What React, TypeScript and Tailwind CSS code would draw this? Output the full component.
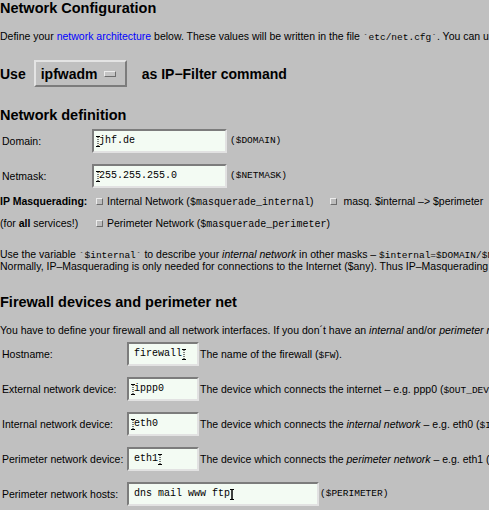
import type { ReactNode } from 'react'

const code = "font-['Liberation_Mono',monospace] text-[9.5px] leading-[10px]"
const codeWide = "font-['Liberation_Mono',monospace] text-[10px] leading-[10px]"

function Caret({ strong = false }: { strong?: boolean }) {
  return (
    <svg width="4" height="11" viewBox="0 0 4 11" className="inline-block align-middle shrink-0">
      <path d="M0 0.5h4M0 10.5h4" stroke="#000" strokeWidth="1" />
      <path d="M2 1v9" stroke="#000" strokeWidth={strong ? 1.5 : 1} strokeDasharray={strong ? undefined : '1 1'} />
    </svg>
  )
}

function Field({ value, width, caret }: { value: string; width: string; caret: 'before' | 'after' | 'strong' }) {
  return (
    <div
      className={`${width} h-[24px] shrink-0 flex items-center pl-[5px] bg-[#f3fbf3] border-2 border-t-[#7c7c7c] border-l-[#7c7c7c] border-r-[#e2e2e2] border-b-[#e2e2e2] font-['Liberation_Mono',monospace] text-[10px]`}
    >
      {caret === 'before' && <span className="-ml-[3px] mr-[-1px] flex"><Caret /></span>}
      <span>{value}</span>
      {caret !== 'before' && <Caret strong={caret === 'strong'} />}
    </div>
  )
}

function Check() {
  return (
    <span className="inline-block w-[7px] h-[7px] shrink-0 bg-[#bcbcbc] border border-t-[#ececec] border-l-[#ececec] border-r-[#6c6c6c] border-b-[#6c6c6c]" />
  )
}

function Row({ label, labelW, children }: { label: string; labelW: string; children: ReactNode }) {
  return (
    <div className="flex items-center h-[24px]">
      <span className={`${labelW} shrink-0 pl-[2px]`}>{label}</span>
      {children}
    </div>
  )
}

export default function App() {
  return (
    <div className="w-[489px] h-[510px] overflow-hidden bg-[#c0c0c0] text-black font-['Liberation_Sans',Arial,sans-serif] text-[10.5px] leading-[12px] whitespace-nowrap">
      <h1 className="text-[14.5px] leading-[17px] font-bold">Network Configuration</h1>
      <p className="mt-[13px] h-[12px]">
        Define your <a className="text-[#0000ff]">network architecture</a> below. These values will be written in the file{' '}
        <span className={code}>´etc/net.cfg´</span>. You can use them in your own scripts.
      </p>

      <div className="mt-[18px] flex items-center h-[27px] text-[14px] font-bold">
        <span>Use</span>
        <div className="ml-[8px] w-[93px] h-[27px] flex items-center pl-[5px] border-2 border-t-[#e4e4e4] border-l-[#e4e4e4] border-r-[#7c7c7c] border-b-[#7c7c7c]">
          <span>ipfwadm</span>
          <span className="ml-[7px] w-[12px] h-[6px] bg-[#c4c4c4] border border-t-[#ececec] border-l-[#ececec] border-r-[#6c6c6c] border-b-[#6c6c6c]" />
        </div>
        <span className="ml-[15px]">as IP−Filter command</span>
      </div>

      <h2 className="mt-[20px] text-[14.5px] leading-[17px] font-bold">Network definition</h2>
      <div className="mt-[5px] flex flex-col gap-[11px]">
        <Row label="Domain:" labelW="w-[92px]">
          <Field value="jhf.de" width="w-[135px]" caret="before" />
          <span className={`ml-[3px] ${code}`}>($DOMAIN)</span>
        </Row>
        <Row label="Netmask:" labelW="w-[92px]">
          <Field value="255.255.255.0" width="w-[135px]" caret="before" />
          <span className={`ml-[3px] ${code}`}>($NETMASK)</span>
        </Row>
      </div>

      <div className="mt-[2px]">
        <div className="flex items-center h-[22px]">
          <span className="w-[96px] shrink-0 font-bold">IP Masquerading:</span>
          <Check />
          <span className="ml-[4px]">
            Internal Network (<span className={codeWide}>$masquerade_internal</span>)
          </span>
          <span className="ml-[17px] flex items-center">
            <Check />
          </span>
          <span className="ml-[6px]">masq. $internal –&gt; $perimeter</span>
        </div>
        <div className="flex items-center h-[22px]">
          <span className="w-[96px] shrink-0">
            (for <b>all</b> services!)
          </span>
          <Check />
          <span className="ml-[4px]">
            Perimeter Network (<span className={codeWide}>$masquerade_perimeter</span>)
          </span>
        </div>
      </div>

      <div className="mt-[14px]">
        <p className="h-[12px]">
          Use the variable <span className={code}>´$internal´</span> to describe your <i>internal network</i> in other masks –{' '}
          <span className={code}>$internal=$DOMAIN/$NETMASK</span>
        </p>
        <p className="h-[12px]">
          Normally, IP–Masquerading is only needed for connections to the Internet ($any). Thus IP–Masquerading for all services is
          seldom needed.
        </p>
      </div>

      <h2 className="mt-[22px] text-[14.5px] leading-[17px] font-bold">Firewall devices and perimeter net</h2>
      <p className="mt-[13px] h-[12px]">
        You have to define your firewall and all network interfaces. If you don´t have an <i>internal</i> and/or{' '}
        <i>perimeter network</i>, leave the fields empty.
      </p>

      <div className="mt-[6px] flex flex-col gap-[11px]">
        <Row label="Hostname:" labelW="w-[127px]">
          <Field value="firewall" width="w-[72px]" caret="after" />
          <span className="ml-[1px]">
            The name of the firewall (<span className={code}>$FW</span>).
          </span>
        </Row>
        <Row label="External network device:" labelW="w-[127px]">
          <Field value="ippp0" width="w-[72px]" caret="before" />
          <span className="ml-[1px]">
            The device which connects the internet – e.g. ppp0 (<span className={code}>$OUT_DEV</span>)
          </span>
        </Row>
        <Row label="Internal network device:" labelW="w-[127px]">
          <Field value="eth0" width="w-[72px]" caret="before" />
          <span className="ml-[1px]">
            The device which connects the <i>internal network</i> – e.g. eth0 (<span className={code}>$INT_DEV</span>)
          </span>
        </Row>
        <Row label="Perimeter network device:" labelW="w-[127px]">
          <Field value="eth1" width="w-[72px]" caret="after" />
          <span className="ml-[1px]">
            The device which connects the <i>perimeter network</i> – e.g. eth1 (<span className={code}>$PER_DEV</span>)
          </span>
        </Row>
        <Row label="Perimeter network hosts:" labelW="w-[127px]">
          <Field value="dns mail www ftp" width="w-[192px]" caret="strong" />
          <span className={`ml-[1px] ${code}`}>($PERIMETER)</span>
        </Row>
      </div>
    </div>
  )
}
